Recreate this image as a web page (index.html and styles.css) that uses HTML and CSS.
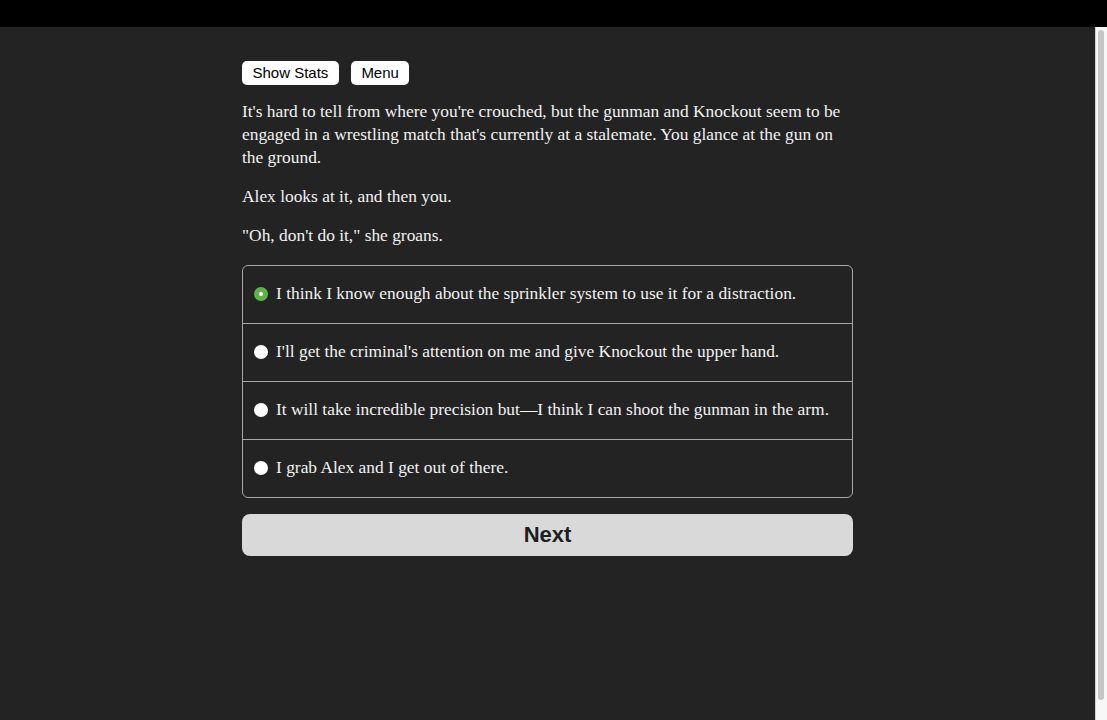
FILE: index.html
```html
<!DOCTYPE html>
<html lang="en">
<head>
<meta charset="utf-8">
<title>Choice</title>
<link rel="stylesheet" href="styles.css">
</head>
<body>
<div class="topbar"></div>
<div class="frame">
  <main class="page">
    <div class="content">
      <div class="toolbar">
        <button class="tool-btn">Show Stats</button>
        <button class="tool-btn">Menu</button>
      </div>
      <p class="story">It's hard to tell from where you're crouched, but the gunman and Knockout seem to be engaged in a wrestling match that's currently at a stalemate. You glance at the gun on the ground.</p>
      <p class="story">Alex looks at it, and then you.</p>
      <p class="story">"Oh, don't do it," she groans.</p>
      <div class="choices">
        <label class="choice"><span class="radio checked"></span><span class="choice-text">I think I know enough about the sprinkler system to use it for a distraction.</span></label>
        <label class="choice"><span class="radio"></span><span class="choice-text">I'll get the criminal's attention on me and give Knockout the upper hand.</span></label>
        <label class="choice"><span class="radio"></span><span class="choice-text">It will take incredible precision but—I think I can shoot the gunman in the arm.</span></label>
        <label class="choice"><span class="radio"></span><span class="choice-text">I grab Alex and I get out of there.</span></label>
      </div>
      <button class="next-btn">Next</button>
    </div>
  </main>
  <div class="scrollbar"><div class="thumb"></div></div>
</div>
</body>
</html>
```
FILE: styles.css
```css
html, body {
  margin: 0;
  padding: 0;
  height: 100%;
  background: #000;
}
body {
  display: flex;
  flex-direction: column;
  overflow: hidden;
}
.topbar {
  height: 27px;
  background: #000;
  flex: none;
}
.frame {
  flex: 1;
  display: flex;
  min-height: 0;
}
.page {
  flex: 1;
  background: #232323;
  display: flex;
  justify-content: center;
}
.content {
  width: 611px;
  padding-top: 34px;
}
.toolbar {
  display: flex;
  gap: 12px;
  margin-bottom: 15px;
}
.tool-btn {
  background: #fff;
  color: #000;
  border: none;
  border-radius: 5px;
  height: 24px;
  padding: 0 10.5px;
  font-family: "Liberation Sans", Arial, sans-serif;
  font-size: 15px;
  line-height: 24px;
}
.story {
  margin: 0 0 16px;
  color: #f2f2f2;
  font-family: "Liberation Serif", "Times New Roman", serif;
  font-size: 17.4px;
  line-height: 23px;
}
.choices {
  margin-top: 18px;
  border: 1px solid #a8a8a8;
  border-radius: 6px;
  display: flex;
  flex-direction: column;
}
.choice {
  height: 57px;
  display: flex;
  align-items: center;
  padding-left: 11px;
  gap: 8px;
  border-top: 1px solid #a8a8a8;
}
.choice:first-child {
  border-top: none;
}
.radio {
  width: 14px;
  height: 14px;
  border-radius: 50%;
  background: #fff;
  flex: none;
  box-sizing: border-box;
  margin-top: -2px;
}
.radio.checked {
  background: #fff;
  border: 5px solid #5db348;
}
.choice-text {
  color: #f2f2f2;
  font-family: "Liberation Serif", "Times New Roman", serif;
  font-size: 17.4px;
  line-height: 23px;
  margin-top: -3px;
}
.next-btn {
  margin-top: 16px;
  width: 100%;
  height: 42px;
  border: none;
  border-radius: 8px;
  background: #d9d9d9;
  color: #1e1e1e;
  font-family: "Liberation Sans", Arial, sans-serif;
  font-weight: bold;
  font-size: 22px;
}
.scrollbar {
  width: 12px;
  flex: none;
  background: #f7f7f7;
  border-left: 1px solid #d0d0d0;
  box-sizing: border-box;
  padding: 3px 3px 20px 2px;
  display: flex;
}
.thumb {
  flex: 1;
  background: #c6c6c6;
  border-radius: 3px;
}
```
